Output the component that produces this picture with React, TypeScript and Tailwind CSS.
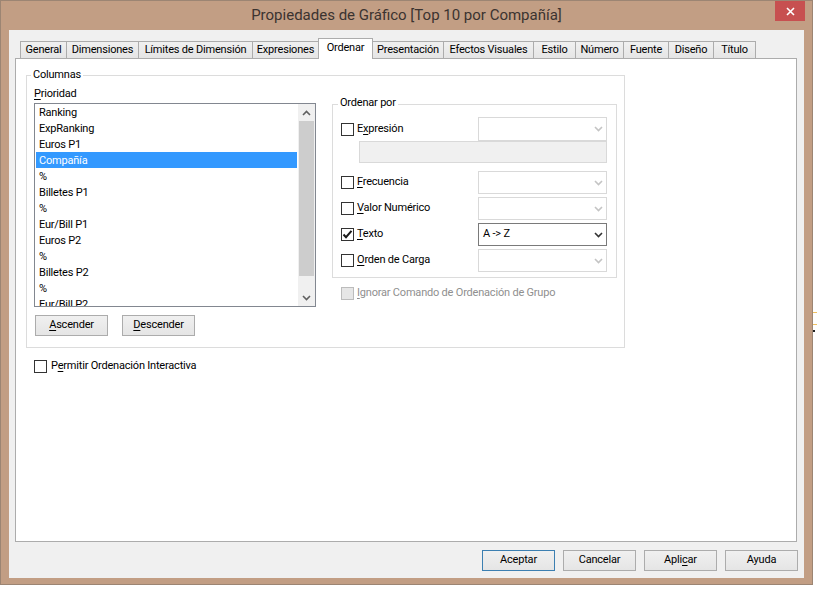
import React from "react";

const font = "font-['Roboto',sans-serif] text-[11px] tracking-[-0.2px] text-black";

const tabs = [
  { label: "General", w: 47 },
  { label: "Dimensiones", w: 73 },
  { label: "Límites de Dimensión", w: 115 },
  { label: "Expresiones", w: 67 },
  { label: "Ordenar", w: 55, active: true },
  { label: "Presentación", w: 72 },
  { label: "Efectos Visuales", w: 91 },
  { label: "Estilo", w: 43 },
  { label: "Número", w: 49 },
  { label: "Fuente", w: 46 },
  { label: "Diseño", w: 46 },
  { label: "Título", w: 43 },
];

const items = [
  "Ranking",
  "ExpRanking",
  "Euros P1",
  "Compañía",
  "%",
  "Billetes P1",
  "%",
  "Eur/Bill P1",
  "Euros P2",
  "%",
  "Billetes P2",
  "%",
  "Eur/Bill P2",
];

// label with one underlined access key
const U = ({ t, i }: { t: string; i: number }) => (
  <>
    {t.slice(0, i)}
    <span className="underline underline-offset-[2px]">{t[i]}</span>
    {t.slice(i + 1)}
  </>
);

const Check = ({ on, dis }: { on?: boolean; dis?: boolean }) => (
  <div
    className={
      dis
        ? "w-[13px] h-[13px] shrink-0 border border-[#bcbcbc] bg-[#e6e6e6]"
        : "w-[13px] h-[13px] shrink-0 border border-[#333333] bg-white flex items-center justify-center"
    }
  >
    {on && (
      <svg width="11" height="11" viewBox="0 0 11 11">
        <path d="M1.5 5.5 L4 8.2 L9.5 1.8" fill="none" stroke="#1a1a1a" strokeWidth="2" />
      </svg>
    )}
  </div>
);

const Chevron = ({ color, up }: { color: string; up?: boolean }) => (
  <svg width="9" height="6" viewBox="0 0 9 6">
    <path
      d={up ? "M1 5 L4.5 1.5 L8 5" : "M1 1 L4.5 4.5 L8 1"}
      fill="none"
      stroke={color}
      strokeWidth="1.6"
    />
  </svg>
);

const Combo = ({ value, on }: { value?: string; on?: boolean }) => (
  <div
    className={`w-[129px] h-full bg-white border flex items-center justify-between pl-[4px] pr-[3px] ${
      on ? "border-[#7a7a7a]" : "border-[#d9d9d9]"
    }`}
  >
    <span>{value}</span>
    <Chevron color={on ? "#333333" : "#c4c4c4"} />
  </div>
);

const SortRow = ({ label, k, on, value }: { label: string; k: number; on?: boolean; value?: string }) => (
  <div className="h-[23px] flex items-center justify-between">
    <div className="flex items-center gap-[3px]">
      <Check on={on} />
      <span>
        <U t={label} i={k} />
      </span>
    </div>
    <Combo on={on} value={value} />
  </div>
);

const Btn = ({ children, def }: { children: React.ReactNode; def?: boolean }) => (
  <div
    className={`w-[73px] h-[21px] flex items-center justify-center border bg-gradient-to-b from-[#f0f0f0] to-[#e5e5e5] ${
      def ? "border-[#3c7fb1]" : "border-[#acacac]"
    }`}
  >
    {children}
  </div>
);

export default function App() {
  return (
    <div className={`w-[817px] h-[590px] bg-white flex ${font}`}>
      <div className="w-[813px] h-[585px] bg-[#c29e84] border border-[#9c8573] flex flex-col">
        {/* title bar */}
        <div className="h-[29px] flex items-start shrink-0">
          <div className="w-[37px]" />
          <div className="flex-1 h-[29px] flex items-center justify-center text-[15px] tracking-normal text-[#3b3330]">
            Propiedades de Gráfico [Top 10 por Compañía]
          </div>
          <div className="w-[37px] flex">
            <div className="w-[30px] h-[20px] bg-[#c75050] flex items-center justify-center">
              <svg width="9" height="9" viewBox="0 0 9 9">
                <path d="M1 1 L8 8 M8 1 L1 8" stroke="white" strokeWidth="1.6" />
              </svg>
            </div>
          </div>
        </div>

        {/* client area */}
        <div className="ml-[8px] w-[795px] h-[548px] bg-[#f0f0f0] flex flex-col">
          <div className="h-[28px] pl-[11px] flex items-end shrink-0">
            {tabs.map((t, i) => (
              <div
                key={t.label}
                style={{ width: t.w }}
                className={`${i > 0 ? "-ml-px" : ""} border-t border-l border-r border-[#acacac] flex items-center justify-center whitespace-nowrap ${
                  t.active
                    ? "relative z-10 h-[21px] -mb-px bg-white pb-[2px]"
                    : "h-[17px] bg-gradient-to-b from-[#f0f0f0] to-[#e5e5e5]"
                }`}
              >
                {t.label}
              </div>
            ))}
          </div>

          {/* tab panel */}
          <div className="ml-[6px] w-[782px] h-[484px] border border-[#acacac] bg-white flex flex-col">
            <div className="relative ml-[10px] mt-[16px] w-[599px] h-[273px] border border-[#dcdcdc] flex pl-[7px] pt-[10px]">
              <span className="absolute left-[4px] -top-[8px] px-[2px] bg-white leading-[14px]">Columnas</span>

              {/* left column */}
              <div className="w-[282px] flex flex-col">
                <div className="h-[15px] leading-[15px]">
                  <U t="Prioridad" i={0} />
                </div>
                <div className="mt-[2px] h-[204px] border border-[#828790] flex">
                  <div className="flex-1 overflow-hidden pl-[1px]">
                    {items.map((it, i) => (
                      <div
                        key={i}
                        className={`w-[261px] h-[16px] leading-[17px] pl-[3px] whitespace-nowrap ${
                          i === 3 ? "bg-[#3399ff] text-white" : ""
                        }`}
                      >
                        {it}
                      </div>
                    ))}
                  </div>
                  <div className="w-[17px] bg-[#f0f0f0] flex flex-col">
                    <div className="h-[17px] flex items-center justify-center">
                      <Chevron color="#606060" up />
                    </div>
                    <div className="flex-1">
                      <div className="mx-[1px] h-[155px] bg-[#cdcdcd]" />
                    </div>
                    <div className="h-[17px] flex items-center justify-center">
                      <Chevron color="#606060" />
                    </div>
                  </div>
                </div>
                <div className="mt-[8px] pl-[1px] flex gap-[14px]">
                  <Btn>
                    <U t="Ascender" i={0} />
                  </Btn>
                  <Btn>
                    <U t="Descender" i={0} />
                  </Btn>
                </div>
              </div>

              {/* right column */}
              <div className="ml-[16px] mt-[18px] w-[285px] flex flex-col">
                <div className="relative h-[174px] border border-[#dcdcdc] pl-[8px] pr-[9px] pt-[12px] flex flex-col">
                  <span className="absolute left-[5px] -top-[9px] px-[2px] bg-white leading-[14px]">Ordenar por</span>
                  <div className="h-[24px] flex items-center justify-between">
                    <div className="flex items-center gap-[3px]">
                      <Check />
                      <span>
                        <U t="Expresión" i={1} />
                      </span>
                    </div>
                    <Combo />
                  </div>
                  <div className="self-end w-[248px] h-[22px] border border-[#d9d9d9] bg-[#f0f0f0]" />
                  <div className="mt-[8px] flex flex-col gap-[3px]">
                    <SortRow label="Frecuencia" k={0} />
                    <SortRow label="Valor Numérico" k={0} />
                    <SortRow label="Texto" k={0} on value="A -> Z" />
                    <SortRow label="Orden de Carga" k={0} />
                  </div>
                </div>
                <div className="mt-[7px] pl-[9px] flex items-center gap-[3px] text-[#8f8f8f]">
                  <Check dis />
                  <span>
                    <U t="Ignorar Comando de Ordenación de Grupo" i={0} />
                  </span>
                </div>
              </div>
            </div>

            <div className="mt-[10px] ml-[18px] flex items-center gap-[4px]">
              <Check />
              <span>
                <U t="Permitir Ordenación Interactiva" i={1} />
              </span>
            </div>
          </div>

          {/* dialog buttons */}
          <div className="mt-[8px] pr-[6px] flex justify-end gap-[8px]">
            <Btn def>Aceptar</Btn>
            <Btn>Cancelar</Btn>
            <Btn>
              <U t="Aplicar" i={4} />
            </Btn>
            <Btn>Ayuda</Btn>
          </div>
        </div>
      </div>

      {/* sliver of the window behind */}
      <div className="w-[4px] flex flex-col">
        <div className="h-[312px]" />
        <div className="h-px bg-[#f0c060]" />
        <div className="h-[11px]" />
        <div className="h-px bg-[#f0c060]" />
        <div className="h-[5px]" />
        <div className="h-[2px] w-[2px] bg-[#222]" />
      </div>
    </div>
  );
}
